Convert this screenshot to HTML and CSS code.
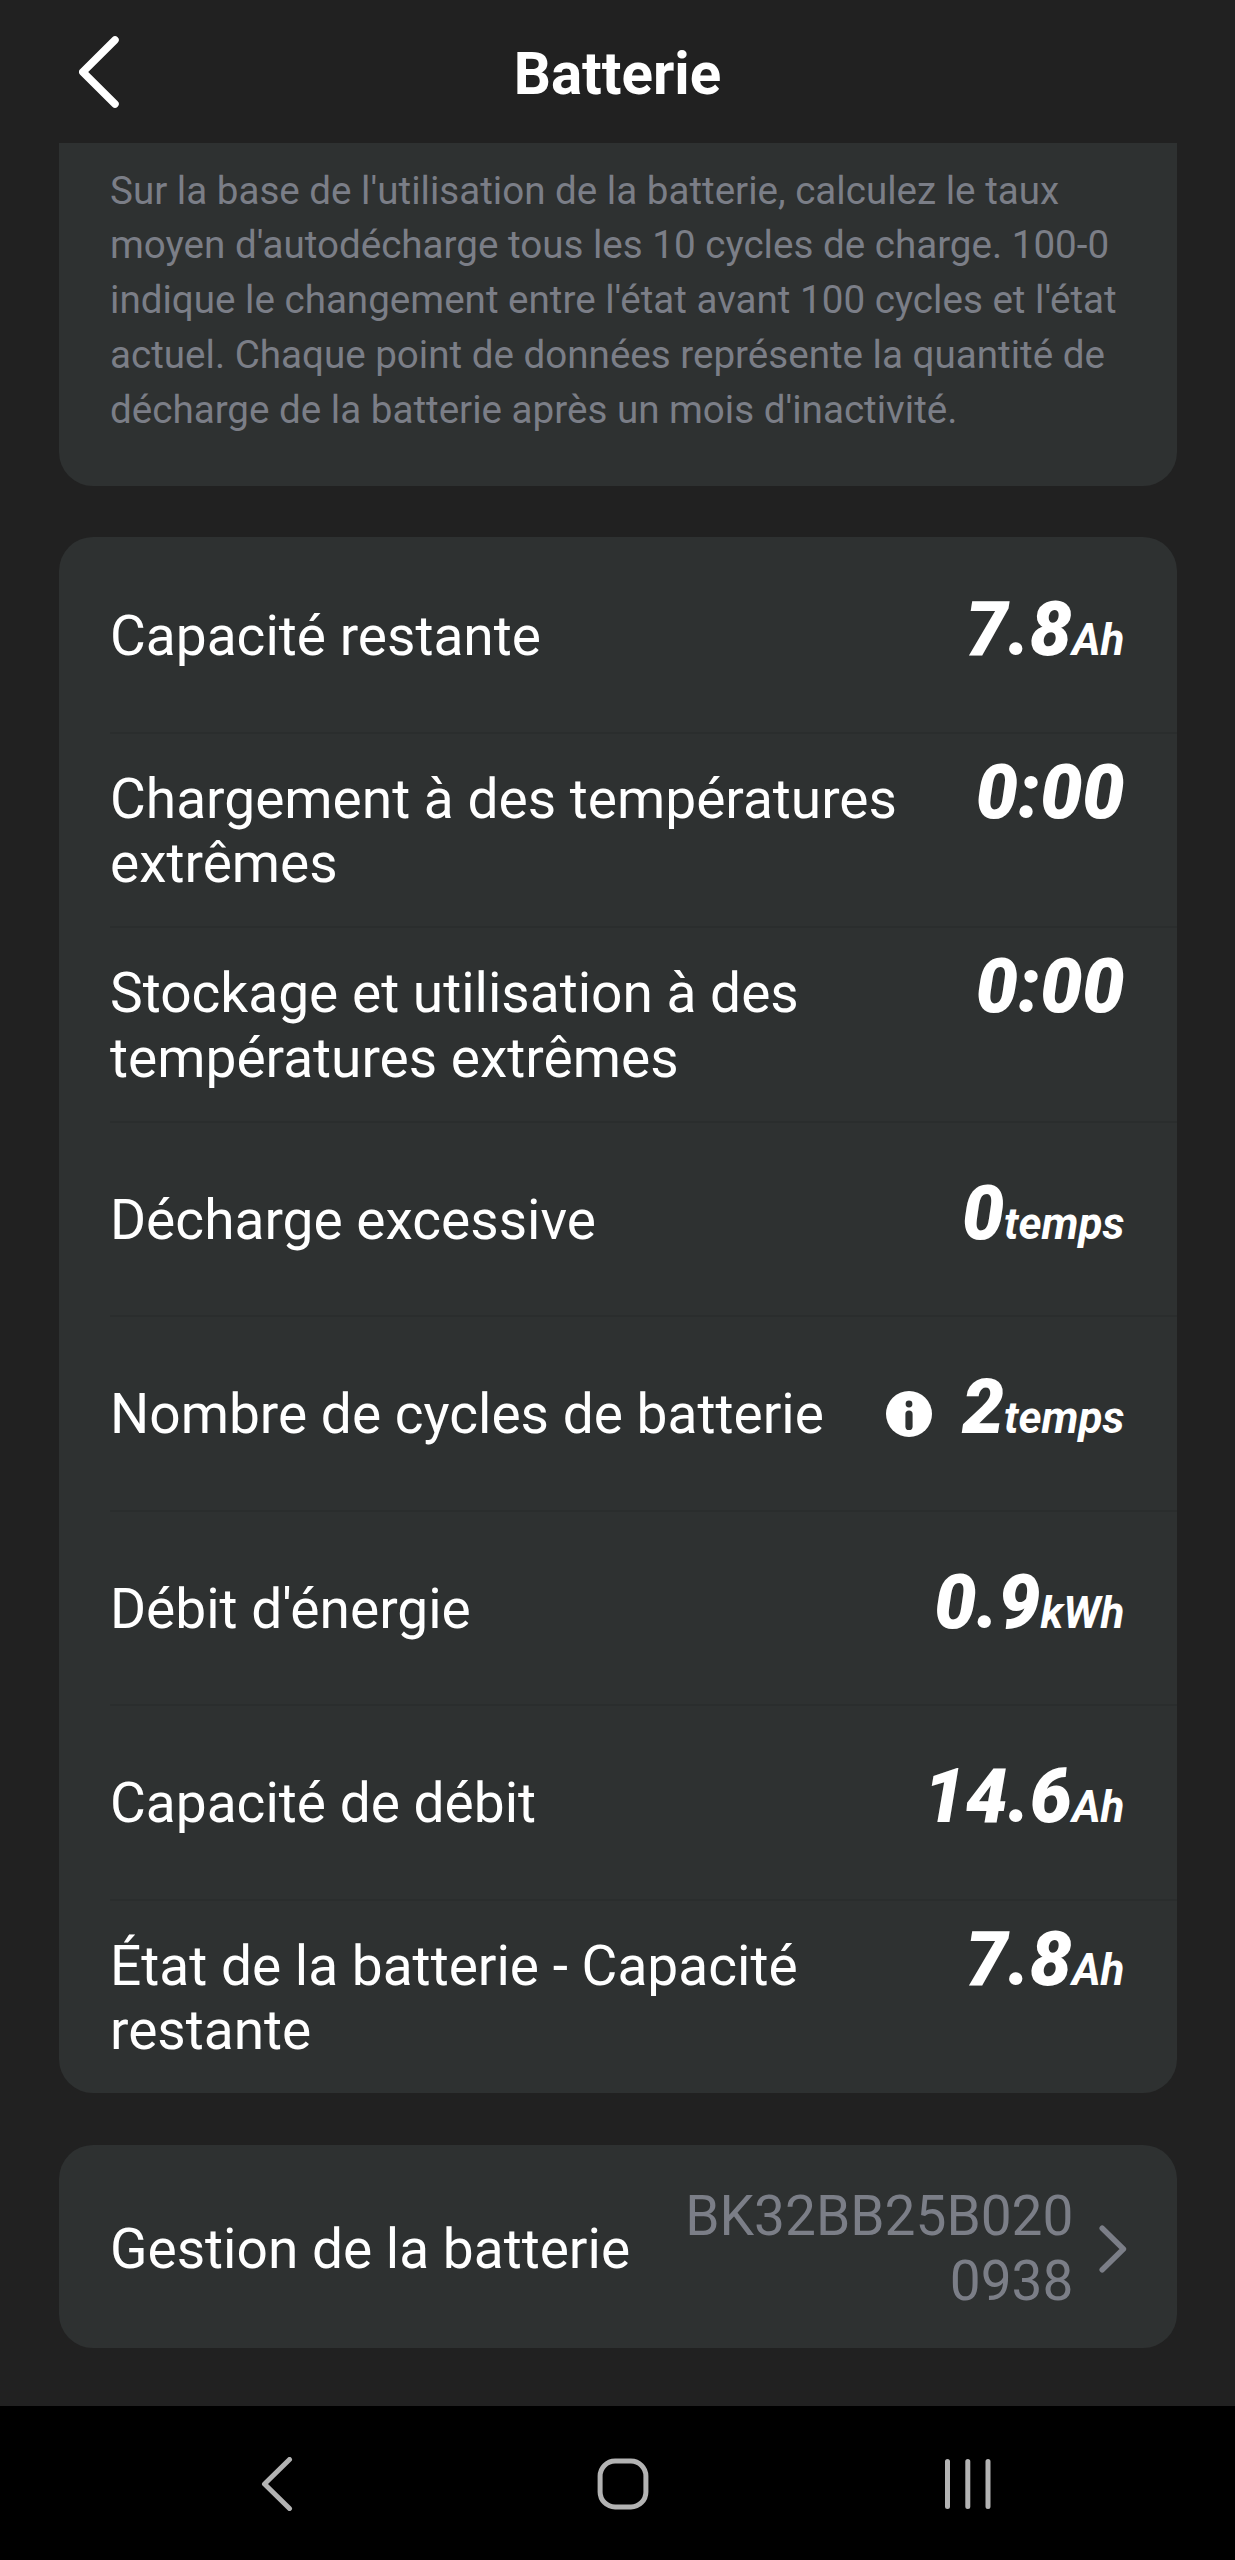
FILE: index.html
```
<!DOCTYPE html>
<html lang="fr">
<head>
    <meta charset="UTF-8">
    <title>Batterie</title>
    <meta name="viewport" content="width=device-width, initial-scale=1.0">
    <link rel="stylesheet" href="styles.css">
</head>
<body>
    <header class="topbar">
        <svg class="back" viewBox="0 0 40 72" width="40" height="72">
            <path d="M36 4 L3.8 36 L36 68"/>
        </svg>
        <h1>Batterie</h1>
    </header>

    <main class="content">
        <section class="card card-note">
            <p>Sur la base de l'utilisation de la batterie, calculez le taux moyen d'autodécharge tous les 10 cycles de charge. 100-0 indique le changement entre l'état avant 100 cycles et l'état actuel. Chaque point de données représente la quantité de décharge de la batterie après un mois d'inactivité.</p>
        </section>

        <section class="card card-stats">
            <div class="row">
                <span class="label">Capacité restante</span>
                <span class="value">7.8<small>Ah</small></span>
            </div>
            <div class="row">
                <span class="label">Chargement à des températures extrêmes</span>
                <span class="value">0:00</span>
            </div>
            <div class="row">
                <span class="label">Stockage et utilisation à des températures extrêmes</span>
                <span class="value">0:00</span>
            </div>
            <div class="row">
                <span class="label">Décharge excessive</span>
                <span class="value">0<small>temps</small></span>
            </div>
            <div class="row">
                <span class="label">Nombre de cycles de batterie</span>
                <svg class="info" viewBox="0 0 46 46" width="46" height="46">
                    <circle cx="23" cy="23" r="23" fill="#fff"/>
                    <circle cx="23" cy="13" r="3.4" fill="#2e3131"/>
                    <rect x="19.4" y="19.5" width="7.2" height="19.5" rx="3.6" fill="#2e3131"/>
                </svg>
                <span class="value">2<small>temps</small></span>
            </div>
            <div class="row">
                <span class="label">Débit d'énergie</span>
                <span class="value">0.9<small>kWh</small></span>
            </div>
            <div class="row">
                <span class="label">Capacité de débit</span>
                <span class="value">14.6<small>Ah</small></span>
            </div>
            <div class="row">
                <span class="label">État de la batterie - Capacité restante</span>
                <span class="value">7.8<small>Ah</small></span>
            </div>
        </section>

        <section class="card card-link">
            <span class="label">Gestion de la batterie</span>
            <span class="serial">BK32BB25B0200938</span>
            <svg class="chevron" viewBox="0 0 28 48" width="28" height="48">
                <path d="M3.2 3.2 L24.4 24 L3.2 44.8"/>
            </svg>
        </section>
    </main>

    <!-- Barre de navigation Android -->
    <nav class="navbar">
        <svg viewBox="0 0 32 54" width="32" height="54">
            <path d="M28.5 2.5 L3.5 27 L28.5 51.5"/>
        </svg>
        <svg class="home" viewBox="0 0 52 52" width="52" height="52">
            <rect x="3.1" y="3.1" width="45.8" height="45.8" rx="15"/>
        </svg>
        <svg viewBox="0 0 46 50" width="46" height="50">
            <path d="M2.5 2.5 V47.5 M22.8 2.5 V47.5 M43 2.5 V47.5"/>
        </svg>
    </nav>
</body>
</html>
```
FILE: styles.css
```
html { box-sizing: border-box; }
*, *:before, *:after { box-sizing: inherit; }
body {
    margin: 0;
    height: 2560px;
    display: flex;
    flex-direction: column;
    background: #212121;
    color: #fff;
    font-family: Roboto, sans-serif;
    font-size: 55.05px;
    line-height: 64.6px;
}
svg {
    flex: none;
    fill: none;
    stroke-linecap: round;
    stroke-linejoin: round;
}

.topbar {
    height: 143px;
    display: grid;
    grid-template-columns: 40px 1fr 40px;
    align-items: center;
    padding: 0 79px;
}
.back {
    stroke: #fff;
    stroke-width: 7.5;
}
h1 {
    margin: 0;
    padding-top: 5px;
    font-size: 58.3px;
    font-weight: 700;
    text-align: center;
}

.content {
    flex: 1;
    display: flex;
    flex-direction: column;
    gap: 51.4px;
    padding: 0 58.5px;
}
.card {
    background: #2e3131;
    border-radius: 34px;
}
.card-note {
    height: 343px;
    padding: 20.7px 50px 0 51.5px;
    border-radius: 0 0 34px 34px;
}
.card-note p {
    margin: 0;
    color: #7b7e87;
    font-size: 38.6px;
    line-height: 54.8px;
}

.card-stats {
    padding-left: 51.5px;
}
.row {
    height: 194.5px;
    display: flex;
    flex-wrap: wrap;
    align-items: baseline;
    align-content: center;
    padding: 2px 52px 0 0;
}
.row + .row {
    padding-top: 0;
    border-top: 2px solid #2a2d2d;
}
.label { flex: 1; }
.value {
    font-size: 75px;
    font-style: italic;
    font-weight: 900;
    line-height: 54px;
    text-align: right;
    white-space: nowrap;
}
.value small {
    font-size: 44px;
    font-weight: 700;
}
.info {
    align-self: center;
    margin-right: 30px;
}

.card-link {
    height: 203.5px;
    display: flex;
    align-items: center;
    padding: 5px 50px 0 51.5px;
}
.serial {
    width: 392px;
    color: #7b7e87;
    text-align: right;
    word-break: break-all;
}
.chevron {
    margin-left: 25px;
    stroke: #7b7e87;
    stroke-width: 5.5;
}

.navbar {
    height: 154.5px;
    display: flex;
    align-items: center;
    justify-content: space-between;
    padding: 2px 244px 0 261px;
    background: #000;
}
.navbar svg {
    stroke: #b3b3b3;
    stroke-width: 5;
}
.navbar .home { margin-left: 7px; }
```
